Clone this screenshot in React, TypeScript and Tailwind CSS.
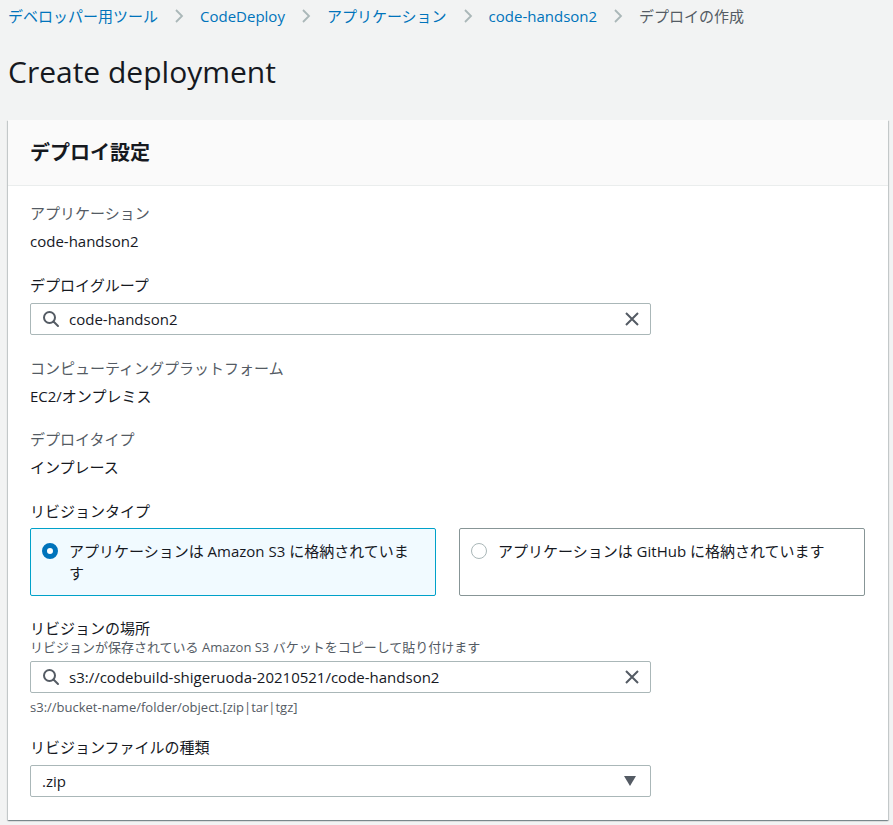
const font = { fontFamily: '"Open Sans", "Noto Sans CJK JP", sans-serif' };

function Chevron() {
  return (
    <svg width="10" height="16" viewBox="0 0 10 16" className="shrink-0">
      <path d="M2 2 L8 8 L2 14" fill="none" stroke="#aab7b8" strokeWidth="1.8" />
    </svg>
  );
}

function SearchIcon() {
  return (
    <svg width="18" height="18" viewBox="0 0 18 18" className="shrink-0">
      <circle cx="7.5" cy="7.5" r="5.5" fill="none" stroke="#545b64" strokeWidth="2" />
      <path d="M11.5 11.5 L16 16" stroke="#545b64" strokeWidth="2" strokeLinecap="round" />
    </svg>
  );
}

function ClearIcon() {
  return (
    <svg width="16" height="16" viewBox="0 0 16 16" className="shrink-0">
      <path d="M2 2 L14 14 M14 2 L2 14" stroke="#545b64" strokeWidth="2" />
    </svg>
  );
}

function SearchInput({ value }: { value: string }) {
  return (
    <div className="flex h-[32px] w-[621px] items-center rounded-[2px] border border-[#aab7b8] bg-white pl-[11px] pr-[10px]">
      <SearchIcon />
      <span className="ml-[9px] flex-1 text-[15px] text-[#16191f]">{value}</span>
      <ClearIcon />
    </div>
  );
}

function Label({ children, dark }: { children: React.ReactNode; dark?: boolean }) {
  return (
    <div className={`text-[15px] leading-[22px] ${dark ? 'text-[#16191f]' : 'text-[#545b64]'}`}>{children}</div>
  );
}

function Value({ children }: { children: React.ReactNode }) {
  return <div className="mt-[6px] text-[15px] leading-[22px] text-[#16191f]">{children}</div>;
}

export default function App() {
  return (
    <div className="min-h-[825px] bg-[#f2f3f3] pl-[8px] pr-[5px] pt-[5px]" style={font}>
      <nav className="flex items-center gap-[16px] text-[15px] leading-[22px]">
        <a className="text-[#0073bb]">デベロッパー用ツール</a>
        <Chevron />
        <a className="text-[#0073bb]">CodeDeploy</a>
        <Chevron />
        <a className="text-[#0073bb]">アプリケーション</a>
        <Chevron />
        <a className="text-[#0073bb]">code-handson2</a>
        <Chevron />
        <span className="text-[#545b64]">デプロイの作成</span>
      </nav>

      <h1 className="mt-[27px] text-[30px] leading-[36px] text-[#16191f]">Create deployment</h1>

      <section className="mt-[30px] bg-white shadow-[0_1px_1px_0_rgba(0,28,36,0.3),1px_1px_1px_0_rgba(0,28,36,0.15),-1px_1px_1px_0_rgba(0,28,36,0.15)]">
        <header className="flex h-[66px] items-center border-b border-[#eaeded] bg-[#fafafa] px-[22px]">
          <h2 className="text-[20px] font-bold text-[#16191f]">デプロイ設定</h2>
        </header>

        <div className="flex flex-col pb-[23px] pl-[22px] pr-[23px] pt-[16px]">
          <div>
            <Label>アプリケーション</Label>
            <Value>code-handson2</Value>
          </div>

          <div className="mt-[22px]">
            <Label dark>デプロイグループ</Label>
            <div className="mt-[7px]">
              <SearchInput value="code-handson2" />
            </div>
          </div>

          <div className="mt-[22px]">
            <Label>コンピューティングプラットフォーム</Label>
            <Value>EC2/オンプレミス</Value>
          </div>

          <div className="mt-[21px]">
            <Label>デプロイタイプ</Label>
            <Value>インプレース</Value>
          </div>

          <div className="mt-[22px]">
            <Label dark>リビジョンタイプ</Label>
            <div className="mt-[6px] grid grid-cols-2 gap-[23px]">
              <label className="flex items-start gap-[11px] rounded-[2px] border border-[#00a1c9] bg-[#f1faff] px-[11px] py-[11px]">
                <span className="mt-[3px] h-[16px] w-[16px] shrink-0 rounded-full border-[5px] border-[#0073bb] bg-white" />
                <span className="max-w-[345px] text-[15px] leading-[22px] text-[#16191f]">アプリケーションは Amazon S3 に格納されています</span>
              </label>
              <label className="flex items-start gap-[11px] rounded-[2px] border border-[#879596] bg-white px-[11px] py-[11px]">
                <span className="mt-[3px] h-[16px] w-[16px] shrink-0 rounded-full border-[1.5px] border-[#aab7b8] bg-white" />
                <span className="text-[15px] leading-[22px] text-[#16191f]">アプリケーションは GitHub に格納されています</span>
              </label>
            </div>
          </div>

          <div className="mt-[22px]">
            <div className="text-[15px] leading-[20px] text-[#16191f]">リビジョンの場所</div>
            <div className="text-[13px] leading-[18px] text-[#545b64]">リビジョンが保存されている Amazon S3 バケットをコピーして貼り付けます</div>
            <div className="mt-[5px]">
              <SearchInput value="s3://codebuild-shigeruoda-20210521/code-handson2" />
            </div>
            <div className="mt-[6px] text-[13px] leading-[17px] text-[#545b64]">s3://bucket-name/folder/object.[zip|tar|tgz]</div>
          </div>

          <div className="mt-[20px]">
            <Label dark>リビジョンファイルの種類</Label>
            <div className="mt-[7px] flex h-[32px] w-[621px] items-center justify-between rounded-[2px] border border-[#aab7b8] bg-white pl-[11px] pr-[14px]">
              <span className="text-[15px] text-[#16191f]">.zip</span>
              <svg width="12" height="10" viewBox="0 0 12 10">
                <path d="M0 0 H12 L6 10 Z" fill="#545b64" />
              </svg>
            </div>
          </div>
        </div>
      </section>
    </div>
  );
}
